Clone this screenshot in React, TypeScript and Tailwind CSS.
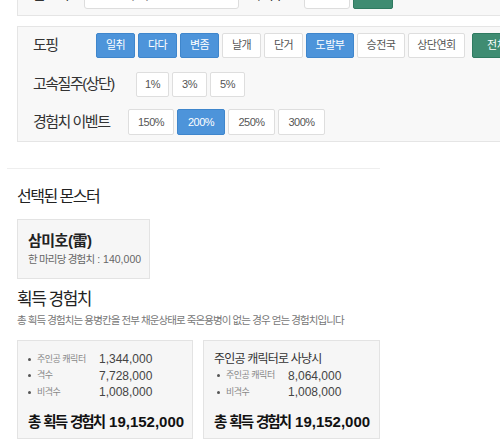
import React from "react";

const FONT = "font-['Liberation_Sans','Noto_Sans_CJK_KR',sans-serif]";

type B = { t: string; w: number; a?: boolean };

const row1: B[] = [
  { t: "일취", w: 39, a: true },
  { t: "다다", w: 39, a: true },
  { t: "변좀", w: 39, a: true },
  { t: "날개", w: 39 },
  { t: "단거", w: 39 },
  { t: "도발부", w: 48, a: true },
  { t: "승전국", w: 48 },
  { t: "상단연회", w: 57 },
];
const row2: B[] = [
  { t: "1%", w: 33 },
  { t: "3%", w: 35 },
  { t: "5%", w: 35 },
];
const row3: B[] = [
  { t: "150%", w: 46 },
  { t: "200%", w: 48, a: true },
  { t: "250%", w: 47 },
  { t: "300%", w: 47 },
];

function Btn({ b, h }: { b: B; h: number }) {
  return (
    <div
      style={{ width: b.w, height: h }}
      className={
        "flex items-center justify-center rounded-[2px] border text-[11px] tracking-[-0.5px] " +
        (b.a
          ? "bg-[#4d94da] border-[#3f86cc] text-white"
          : "bg-white border-[#dedede] text-[#555]")
      }
    >
      {b.t}
    </div>
  );
}

function Item({ label, value }: { label: string; value: string }) {
  return (
    <div className="flex items-center h-[16.5px]">
      <span className="w-[3px] h-[3px] rounded-full bg-[#555] mr-[6px]" />
      <span className="w-[62px] text-[9px] text-[#888] tracking-[-0.5px]">{label}</span>
      <span className="text-[12px] text-[#444]">{value}</span>
    </div>
  );
}

function Total() {
  return (
    <div className="mt-[11px] flex items-baseline whitespace-nowrap font-bold text-[#111] leading-[20px]">
      <span className="text-[14.5px] tracking-[-2px]">총</span>
      <span className="ml-[4px] text-[14.5px] tracking-[-2px]">획득</span>
      <span className="ml-[4px] text-[14.5px] tracking-[-2px]">경험치</span>
      <span className="ml-[5px] text-[15px]">19,152,000</span>
    </div>
  );
}

export default function App() {
  return (
    <div className={"w-[500px] h-[444px] overflow-hidden bg-white relative " + FONT}>
      {/* panel 1 (scrolled, only its lower edge shows) */}
      <div className="ml-[17px] w-[560px] h-[16px] overflow-hidden bg-[#f8f8f8] border-l border-b border-[#e5e5e5]">
        <div className="flex items-center h-[30px] mt-[-21px] pl-[15px]">
          <span className="w-[51px] text-[14px] text-[#333] tracking-[-1px]">몬스터</span>
          <div className="w-[155px] h-[30px] bg-white border border-[#ddd] rounded-[3px] flex items-center pl-[12px] text-[12px] text-[#777]">
            삼미호(雷)
          </div>
          <span className="ml-[10px] w-[55px] text-[14px] text-[#333] tracking-[-1px]">마리수</span>
          <div className="w-[46px] h-[30px] bg-white border border-[#ddd] rounded-[3px] flex items-center pl-[9px] text-[12px] text-[#555]">
            8
          </div>
          <div className="ml-[3px] w-[40px] h-[30px] bg-[#3f8c72] border border-[#2f7a60] rounded-[2px] flex items-center justify-center text-[11px] text-white">
            추가
          </div>
        </div>
      </div>

      {/* panel 2 */}
      <div className="mt-[10px] ml-[17px] w-[560px] h-[116px] bg-[#f8f8f8] border border-[#e5e5e5] pl-[15px] pt-[6px] flex flex-col">
        <div className="flex items-center h-[25px]">
          <span className="w-[63px] text-[15px] text-[#333] tracking-[-1.5px]">도핑</span>
          <div className="flex gap-[3px]">
            {row1.map((b) => (
              <Btn key={b.t} b={b} h={25} />
            ))}
          </div>
          <div className="ml-[7px] w-[50px] h-[25px] bg-[#3f8c72] border border-[#2f7a60] rounded-[2px] flex items-center justify-center text-[11px] text-white">
            전체
          </div>
        </div>
        <div className="flex items-center h-[25px] mt-[14px]">
          <span className="w-[103px] text-[15px] text-[#333] tracking-[-1.5px]">고속질주(상단)</span>
          <div className="flex gap-[3px]">
            {row2.map((b) => (
              <Btn key={b.t} b={b} h={25} />
            ))}
          </div>
        </div>
        <div className="flex items-center h-[26px] mt-[12px]">
          <span className="w-[95px] text-[15px] text-[#333] tracking-[-1.5px]">경험치 이벤트</span>
          <div className="flex gap-[3px]">
            {row3.map((b) => (
              <Btn key={b.t} b={b} h={26} />
            ))}
          </div>
        </div>
      </div>

      <div className="mt-[26px] ml-[7px] w-[373px] h-px bg-[#eeeeee]" />

      <div className="pl-[17px]">
        <div className="mt-[17px] text-[16px] leading-[22px] text-[#222] tracking-[-1.5px]">선택된 몬스터</div>

        <div className="mt-[11px] w-[133px] h-[60px] bg-[#f6f6f6] border border-[#e3e3e3] pl-[10px] pt-[12px]">
          <div className="text-[15px] leading-[18px] font-bold text-[#222] tracking-[-0.5px]">삼미호(雷)</div>
          <div className="mt-[2px] whitespace-nowrap text-[10.5px] leading-[14px] text-[#666]">
            <span className="tracking-[-0.8px]">한 마리당 경험치</span>
            <span className="ml-[3px]">: 140,000</span>
          </div>
        </div>

        <div className="mt-[10px] text-[17px] leading-[22px] text-[#222] tracking-[-1.5px]">획득 경험치</div>
        <div className="mt-[2px] whitespace-nowrap text-[10.5px] leading-[14px] text-[#777] tracking-[-0.9px]">
          총 획득 경험치는 용병칸을 전부 채운상태로 죽은용병이 없는 경우 얻는 경험치입니다
        </div>

        <div className="mt-[13px] flex gap-[10px]">
          <div className="w-[176px] h-[99px] bg-[#f6f6f6] border border-[#e3e3e3] pl-[10px] pt-[10px]">
            <Item label="주인공 캐릭터" value="1,344,000" />
            <Item label="격수" value="7,728,000" />
            <Item label="비격수" value="1,008,000" />
            <Total />
          </div>
          <div className="w-[177px] h-[99px] bg-[#f6f6f6] border border-[#e3e3e3] pl-[10px] pt-[10px]">
            <div className="h-[16.5px] flex items-center text-[12px] text-[#333] tracking-[-0.8px]">
              주인공 캐릭터로 사냥시
            </div>
            <div className="pl-[3px]">
              <Item label="주인공 캐릭터" value="8,064,000" />
              <Item label="비격수" value="1,008,000" />
            </div>
            <Total />
          </div>
        </div>
      </div>
    </div>
  );
}
